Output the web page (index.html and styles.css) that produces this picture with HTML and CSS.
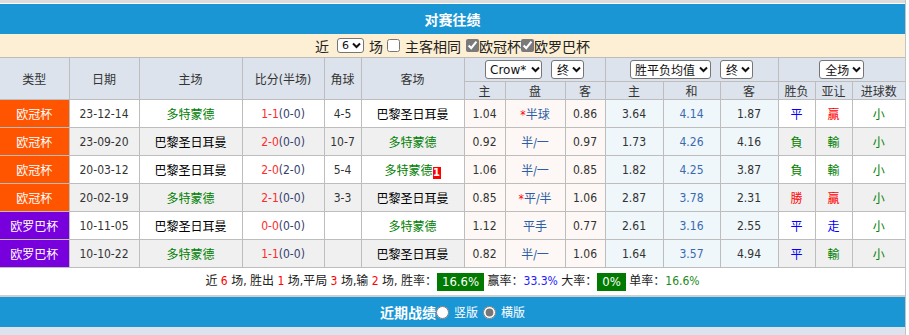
FILE: index.html
```html
<!DOCTYPE html>
<html lang="zh-CN">
<head>
<meta charset="utf-8">
<title>对赛往绩</title>
<link rel="stylesheet" href="styles.css">
</head>
<body>
<div class="wrap">
  <div class="topline"></div>
  <div class="titlebar">对赛往绩</div>
  <div class="filter">
    <span>近</span>
    <span class="dd dd-n"><span>6</span><svg class="chev" width="9" height="7" viewBox="0 0 9 7"><path d="M1 1.5 L4.5 5 L8 1.5"/></svg></span>
    <span class="f-chang">场</span>
    <input type="checkbox" class="cb cb-first">
    <span class="f-same">主客相同</span>
    <input type="checkbox" class="cb cb-on cb-gap" checked><span>欧冠杯</span><input type="checkbox" class="cb cb-on" checked><span>欧罗巴杯</span>
  </div>
  <table class="grid">
    <colgroup>
      <col style="width:69px"><col style="width:70px"><col style="width:103px"><col style="width:82px"><col style="width:37px"><col style="width:103px">
      <col style="width:41px"><col style="width:60px"><col style="width:40px">
      <col style="width:58px"><col style="width:57px"><col style="width:58px">
      <col style="width:37px"><col style="width:37px"><col style="width:53px">
    </colgroup>
    <thead>
      <tr class="h1">
        <th rowspan="2" class="c-first">类型</th>
        <th rowspan="2">日期</th>
        <th rowspan="2">主场</th>
        <th rowspan="2">比分(半场)</th>
        <th rowspan="2">角球</th>
        <th rowspan="2">客场</th>
        <th colspan="3"><div class="ddrow"><span class="dd dd-crow"><span class="lat">Crow*</span><svg class="chev" width="9" height="7" viewBox="0 0 9 7"><path d="M1 1.5 L4.5 5 L8 1.5"/></svg></span><span class="dd dd-end"><span>终</span><svg class="chev" width="9" height="7" viewBox="0 0 9 7"><path d="M1 1.5 L4.5 5 L8 1.5"/></svg></span></div></th>
        <th colspan="3"><div class="ddrow"><span class="dd dd-avg"><span>胜平负均值</span><svg class="chev" width="9" height="7" viewBox="0 0 9 7"><path d="M1 1.5 L4.5 5 L8 1.5"/></svg></span><span class="dd dd-end"><span>终</span><svg class="chev" width="9" height="7" viewBox="0 0 9 7"><path d="M1 1.5 L4.5 5 L8 1.5"/></svg></span></div></th>
        <th colspan="3" class="c-last"><div class="ddrow"><span class="dd dd-all"><span>全场</span><svg class="chev" width="9" height="7" viewBox="0 0 9 7"><path d="M1 1.5 L4.5 5 L8 1.5"/></svg></span></div></th>
      </tr>
      <tr class="h2">
        <th>主</th><th>盘</th><th>客</th>
        <th>主</th><th>和</th><th>客</th>
        <th>胜负</th><th>亚让</th><th class="c-last">进球数</th>
      </tr>
    </thead>
    <tbody>
      <tr class="row">
        <td class="c-first t-ucl">欧冠杯</td>
        <td class="date">23-12-14</td>
        <td class="tg">多特蒙德</td>
        <td class="score"><span class="sc">1-1</span><span class="ht">(0-0)</span></td>
        <td class="corner">4-5</td>
        <td class="tb">巴黎圣日耳曼</td>
        <td class="odds">1.04</td><td class="odds pan"><span class="star">*</span>半球</td><td class="odds">0.86</td>
        <td class="eu">3.64</td><td class="eu eu-d">4.14</td><td class="eu">1.87</td>
        <td class="rb">平</td><td class="rr">贏</td><td class="rg c-last">小</td>
      </tr>
      <tr class="row alt">
        <td class="c-first t-ucl">欧冠杯</td>
        <td class="date">23-09-20</td>
        <td class="tb">巴黎圣日耳曼</td>
        <td class="score"><span class="sc">2-0</span><span class="ht">(0-0)</span></td>
        <td class="corner">10-7</td>
        <td class="tg">多特蒙德</td>
        <td class="odds">0.92</td><td class="odds pan">半/一</td><td class="odds">0.97</td>
        <td class="eu">1.73</td><td class="eu eu-d">4.26</td><td class="eu">4.16</td>
        <td class="rg">負</td><td class="rg">輸</td><td class="rg c-last">小</td>
      </tr>
      <tr class="row">
        <td class="c-first t-ucl">欧冠杯</td>
        <td class="date">20-03-12</td>
        <td class="tb">巴黎圣日耳曼</td>
        <td class="score"><span class="sc">2-0</span><span class="ht">(2-0)</span></td>
        <td class="corner">5-4</td>
        <td class="tg">多特蒙德<span class="rc">1</span></td>
        <td class="odds">1.06</td><td class="odds pan">半/一</td><td class="odds">0.85</td>
        <td class="eu">1.82</td><td class="eu eu-d">4.25</td><td class="eu">3.87</td>
        <td class="rg">負</td><td class="rg">輸</td><td class="rg c-last">小</td>
      </tr>
      <tr class="row alt">
        <td class="c-first t-ucl">欧冠杯</td>
        <td class="date">20-02-19</td>
        <td class="tg">多特蒙德</td>
        <td class="score"><span class="sc">2-1</span><span class="ht">(0-0)</span></td>
        <td class="corner">3-3</td>
        <td class="tb">巴黎圣日耳曼</td>
        <td class="odds">0.85</td><td class="odds pan"><span class="star">*</span>平/半</td><td class="odds">1.06</td>
        <td class="eu">2.87</td><td class="eu eu-d">3.78</td><td class="eu">2.31</td>
        <td class="rr">勝</td><td class="rr">贏</td><td class="rg c-last">小</td>
      </tr>
      <tr class="row">
        <td class="c-first t-uel">欧罗巴杯</td>
        <td class="date">10-11-05</td>
        <td class="tb">巴黎圣日耳曼</td>
        <td class="score"><span class="sc">0-0</span><span class="ht">(0-0)</span></td>
        <td class="corner"></td>
        <td class="tg">多特蒙德</td>
        <td class="odds">1.12</td><td class="odds pan">平手</td><td class="odds">0.77</td>
        <td class="eu">2.61</td><td class="eu eu-d">3.16</td><td class="eu">2.55</td>
        <td class="rb">平</td><td class="rb">走</td><td class="rg c-last">小</td>
      </tr>
      <tr class="row alt">
        <td class="c-first t-uel">欧罗巴杯</td>
        <td class="date">10-10-22</td>
        <td class="tg">多特蒙德</td>
        <td class="score"><span class="sc">1-1</span><span class="ht">(0-0)</span></td>
        <td class="corner"></td>
        <td class="tb">巴黎圣日耳曼</td>
        <td class="odds">0.82</td><td class="odds pan">半/一</td><td class="odds">1.06</td>
        <td class="eu">1.64</td><td class="eu eu-d">3.57</td><td class="eu">4.94</td>
        <td class="rb">平</td><td class="rg">輸</td><td class="rg c-last">小</td>
      </tr>
    </tbody>
  </table>
  <div class="summary">近 <span class="n">6</span> 场, 胜出 <span class="n">1</span> 场,平局 <span class="n">3</span> 场,输 <span class="n">2</span> 场, 胜率：<span class="badge">16.6%</span> 赢率：<span class="blue">33.3%</span> 大率：<span class="badge">0%</span> 单率：<span class="green">16.6%</span></div>
  <div class="bottombar">
    <span class="bb-title">近期战绩</span><input type="radio" name="v" class="rd"><span class="bb-lbl">竖版</span><input type="radio" name="v" class="rd rd-gap" checked><span class="bb-lbl">横版</span>
  </div>
  <div class="strip"></div>
</div>
</body>
</html>
```
FILE: styles.css
```css
* { box-sizing: border-box; }
html, body { margin: 0; padding: 0; background: #fff; }
body {
  font-family: "DejaVu Sans Condensed", "Liberation Sans", "Noto Sans CJK SC", sans-serif;
  font-size: 12px;
  color: #333;
}
.wrap { width: 906px; border-right: 1px solid #c4c4c4; }
.topline { height: 3px; background: #dcdcdc; margin-bottom: 1px; }
.titlebar {
  height: 30px;
  background: #1b96d5;
  color: #fff;
  font: bold 14px/30px "Noto Sans CJK SC", sans-serif;
  text-align: center;
}
.filter {
  height: 23px;
  background: #fdefd3;
  display: flex;
  align-items: center;
  justify-content: center;
  font: 14px/1 "Noto Sans CJK SC", sans-serif;
  color: #222;
}
.filter .dd-n { margin-left: 8px; width: 27px; height: 15px; font: 11px/1 "DejaVu Sans", sans-serif; padding: 0 2px 0 4px; }
.f-chang { margin-left: 5px; }
.cb { width: 13px; height: 13px; margin: 0; accent-color: #7a7a7a; }
.cb-first { margin-left: 4px; }
.f-same { margin-left: 5px; }
.cb-gap { margin-left: 5px; }

.dd {
  display: inline-flex;
  align-items: center;
  justify-content: space-between;
  height: 19px;
  border: 1px solid #767676;
  border-radius: 3px;
  background: #fff;
  padding: 0 2px 0 4px;
  color: #111;
  font: 12px/1 "Noto Sans CJK SC", sans-serif;
}
.dd .lat { font: 12px/1 "DejaVu Sans", sans-serif; }
.chev { flex: none; }
.chev path { fill: none; stroke: #111; stroke-width: 2; }
.dd-crow { width: 57px; padding-left: 4px; padding-right: 1px; }
.dd-end { width: 33px; padding-left: 5px; }
.dd-avg { width: 81px; }
.dd-all { width: 45px; padding-left: 5px; }
.ddrow { display: flex; justify-content: center; gap: 9px; }

.grid {
  width: 905px;
  table-layout: fixed;
  border-collapse: collapse;
}
.grid th, .grid td {
  border: 1px solid #bdbdbd;
  padding: 0;
  text-align: center;
  vertical-align: middle;
  white-space: nowrap;
  overflow: hidden;
}
.grid .c-first { border-left: 0; }
.grid .c-last { border-right: 0; }
.grid th {
  background: #dce3ed;
  font-weight: normal;
  color: #333;
  font-size: 12px;
}
.grid tr.h1 { height: 24px; }
.grid tr.h2 { height: 18px; }
.grid tr.row { height: 28px; }
.grid tr td { background: #fff; }
.grid tr.alt td { background: #f0f0f0; }
.grid tr td.odds { background: #fdf8f5; }
.grid tr td.eu { background: #eff7fb; }
.grid tr td.t-ucl { background: #ff5500; color: #fff; }
.grid tr td.t-uel { background: #7700dd; color: #fff; }

.tg { color: #008000; }
.tb { color: #000; }
.sc { color: #ff2b2b; }
.ht { color: #33406e; }
.date, .corner { color: #333; }
.pan { color: #2c5da6; }
.star { color: #f00; }
.eu-d { color: #3b69b0; }
.rr { color: #f00; }
.rb { color: #0000ff; }
.rg { color: #008000; }
.rc {
  display: inline-block;
  width: 8px;
  height: 12px;
  background: #f00;
  color: #fff;
  font: bold 10px/12px "DejaVu Sans", sans-serif;
  text-align: center;
  vertical-align: -1px;
}

.summary {
  height: 29px;
  border-bottom: 2px solid #cfcfcf;
  text-align: center;
  line-height: 27px;
  color: #222;
  font-size: 12px;
}
.summary .n { color: #f00; }
.summary .blue { color: #2020ff; }
.summary .green { color: #1a8a1a; }
.badge {
  display: inline-block;
  background: #007a00;
  color: #fff;
  height: 18px;
  line-height: 18px;
  padding: 0 5px;
  font-size: 13px;
  vertical-align: middle;
}
.bottombar {
  height: 30px;
  background: #1b96d5;
  color: #fff;
  display: flex;
  align-items: center;
  justify-content: center;
  font: 12px/1 "Noto Sans CJK SC", sans-serif;
}
.bb-title { font-weight: bold; font-size: 14px; }
.rd { width: 13px; height: 13px; margin: 0; accent-color: #777; }
.bb-lbl { margin-left: 5px; }
.rd-gap { margin-left: 5px; }
.strip { height: 8px; background: #dce3ed; }
```
